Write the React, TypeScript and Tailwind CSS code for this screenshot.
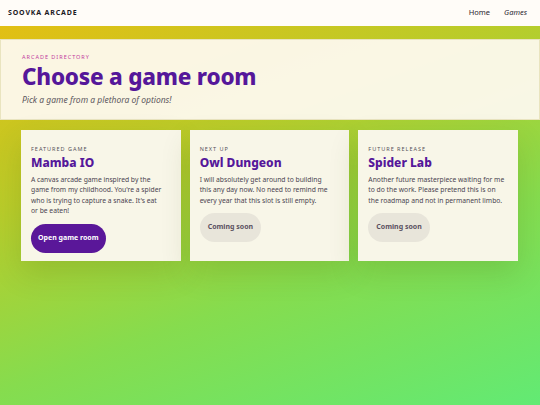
export default function App() {
  const games = [
    {
      label: 'Featured game',
      title: 'Mamba IO',
      lines: ['A canvas arcade game inspired by the', "game from my childhood. You're a spider", "who is trying to capture a snake. It's eat", 'or be eaten!'],
      live: true,
    },
    {
      label: 'Next up',
      title: 'Owl Dungeon',
      lines: ['I will absolutely get around to building', 'this any day now. No need to remind me', 'every year that this slot is still empty.'],
      live: false,
    },
    {
      label: 'Future release',
      title: 'Spider Lab',
      lines: ['Another future masterpiece waiting for me', 'to do the work. Please pretend this is on', 'the roadmap and not in permanent limbo.'],
      live: false,
    },
  ];

  return (
    <div
      className="min-h-screen bg-[linear-gradient(160deg,#e8bd10_0%,#b9cc2a_35%,#86dc4e_65%,#62ea74_100%)] text-[#3f3a44]"
      style={{ fontFamily: '"Noto Sans", "DejaVu Sans", sans-serif' }}
    >
      <header className="h-[26px] bg-[#fffcf8] flex items-center justify-between pl-[8px] pr-[13px]">
        <div className="text-[7px] font-bold tracking-[0.12em] uppercase text-[#1c1a1f]">Soovka Arcade</div>
        <nav className="flex items-center gap-[14px] text-[7.5px] text-[#2a2630]">
          <a href="#">Home</a>
          <a href="#" className="italic">Games</a>
        </nav>
      </header>

      <main className="pt-[13px]">
        <section className="h-[81px] border border-[#e9e4bf] bg-[#fdf9ee]/95 px-[21px] pt-[15px]">
          <p className="text-[5.5px] uppercase tracking-[0.18em] text-[#c23a9e] leading-none">Arcade directory</p>
          <h1 className="mt-[5px] text-[22.5px] font-extrabold leading-none text-[#55179a] tracking-[-0.01em]">
            Choose a game room
          </h1>
          <p className="mt-[8px] text-[8.5px] italic text-[#5d5860] leading-none">Pick a game from a plethora of options!</p>
        </section>

        <div className="mt-[10px] px-[21px] grid grid-cols-3 gap-[9px] pr-[22px]">
          {games.map((g) => (
            <article
              key={g.title}
              className="h-[131px] bg-[#f8f6e8] px-[10px] pt-[17px] shadow-[0_12px_28px_rgba(60,80,0,0.16)]"
            >
              <p className="text-[5.5px] uppercase tracking-[0.18em] text-[#55505a] leading-none">{g.label}</p>
              <h2 className="mt-[3px] text-[12px] font-extrabold text-[#55179a] leading-[14px]">{g.title}</h2>
              <p className="mt-[5px] text-[6.75px] leading-[10.5px] text-[#4a4450] whitespace-nowrap">
                {g.lines.map((l, i) => (
                  <span key={i} className="block">{l}</span>
                ))}
              </p>
              <button
                className={
                  g.live
                    ? 'mt-[7px] h-[29px] px-[7px] rounded-full bg-[#5a1799] text-white text-[7px] font-bold'
                    : 'mt-[7px] h-[29px] px-[8px] rounded-full bg-[#e8e5da] text-[#5a5060] text-[7px] font-bold'
                }
              >
                {g.live ? 'Open game room' : 'Coming soon'}
              </button>
            </article>
          ))}
        </div>
      </main>
    </div>
  );
}
